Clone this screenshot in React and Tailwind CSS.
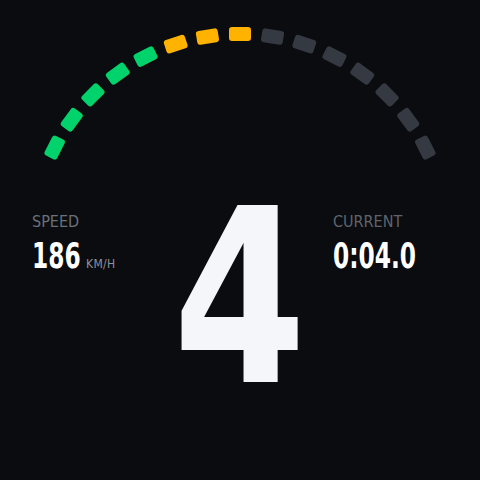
import React from "react";

const SEGMENTS = 15;
const START = -63;
const STEP = 9;
const CX = 240;
const CY = 242;
const R = 208;

const segColor = (i) => {
  if (i < 5) return "#00d36b";
  if (i < 8) return "#ffb300";
  return "#353a42";
};

const Gauge = () => (
  <svg width="480" height="200" viewBox="0 0 480 200" className="block">
    {Array.from({ length: SEGMENTS }).map((_, i) => {
      const a = START + STEP * i;
      const rad = (a * Math.PI) / 180;
      const x = CX + R * Math.sin(rad);
      const y = CY - R * Math.cos(rad);
      return (
        <rect
          key={i}
          x={x - 11}
          y={y - 7}
          width="22"
          height="14"
          rx="3"
          fill={segColor(i)}
          transform={`rotate(${a} ${x} ${y})`}
        />
      );
    })}
  </svg>
);

const font = { fontFamily: '"DejaVu Sans Condensed", "DejaVu Sans", sans-serif' };

export default function App() {
  return (
    <div className="w-[480px] h-[480px] bg-[#0a0c0f] overflow-hidden" style={font}>
      <Gauge />
      <div className="flex items-start">
        <div className="w-[160px] pl-8 pt-[14px]">
          <div className="text-[16px] leading-none text-[#6b7079]">SPEED</div>
          <div className="mt-[8px] flex items-baseline">
            <span className="w-[54px] inline-block">
              <span className="inline-block origin-left scale-x-[0.72] text-[36px] leading-none font-bold text-white">186</span>
            </span>
            <span className="text-[12px] leading-none text-[#8d929a] tracking-wide">KM/H</span>
          </div>
        </div>
        <div className="w-[160px] flex justify-center">
          <span className="inline-block scale-x-[0.88] text-[242px] leading-[200px] font-bold text-[#f5f6fa] -mt-[2px]">4</span>
        </div>
        <div className="w-[160px] pl-[13px] pt-[14px]">
          <div className="text-[16px] leading-none text-[#5f646c]">CURRENT</div>
          <div className="mt-[8px] inline-block origin-left scale-x-[0.72] text-[36px] leading-none font-bold text-white">0:04.0</div>
        </div>
      </div>
    </div>
  );
}
